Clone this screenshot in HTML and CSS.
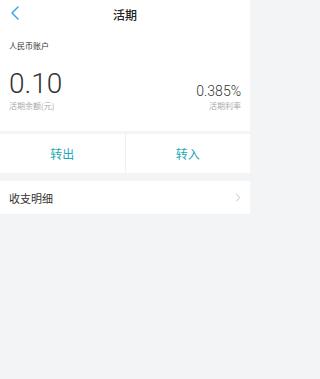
FILE: index.html
```html
<!DOCTYPE html>
<html lang="zh">
<head>
<meta charset="utf-8">
<link rel="stylesheet" href="styles.css">
</head>
<body>
<div class="page">
  <section class="summary">
    <header class="nav">
      <span class="back">
        <svg width="10" height="14" viewBox="0 0 10 14"><path d="M8 1 L2 7 L8 13" fill="none" stroke="#2b9ff2" stroke-width="1.4" stroke-linecap="round" stroke-linejoin="round"/></svg>
      </span>
      <h1 class="title">活期</h1>
    </header>
    <div class="account">人民币账户</div>
    <div class="figures">
      <div class="fig-left">
        <div class="balance">0.10</div>
        <div class="label">活期余额(元)</div>
      </div>
      <div class="fig-right">
        <div class="rate">0.385%</div>
        <div class="label">活期利率</div>
      </div>
    </div>
  </section>
  <section class="actions">
    <div class="action">转出</div>
    <div class="action">转入</div>
  </section>
  <section class="list">
    <div class="row">
      <span class="row-text">收支明细</span>
      <svg class="chev" width="6" height="9" viewBox="0 0 6 9"><path d="M1.5 1 L4.5 4.5 L1.5 8" fill="none" stroke="#c4c4c4" stroke-width="1" stroke-linecap="round" stroke-linejoin="round"/></svg>
    </div>
  </section>
</div>
</body>
</html>
```
FILE: styles.css
```css
html, body {
  margin: 0;
  padding: 0;
}
body {
  background: #f2f4f5;
  font-family: "Noto Sans CJK SC", "Noto Sans", sans-serif;
  color: #333;
  width: 250px;
  min-height: 379px;
}
.page {
  display: flex;
  flex-direction: column;
}
.summary {
  background: #fff;
  padding: 0 9px 20px 9px;
}
.nav {
  position: relative;
  height: 29px;
  display: flex;
  align-items: center;
  justify-content: center;
}
.back {
  position: absolute;
  left: 1px;
  top: 6px;
  display: flex;
}
.title {
  margin: 0;
  font-size: 12px;
  font-weight: 500;
  color: #222;
  line-height: 29px;
}
.account {
  margin-top: 11px;
  font-size: 8px;
  line-height: 12px;
  color: #333;
}
.figures {
  margin-top: 15px;
  display: flex;
  justify-content: space-between;
  align-items: flex-end;
}
.fig-left, .fig-right {
  display: flex;
  flex-direction: column;
}
.fig-right {
  align-items: flex-end;
}
.balance {
  font-family: Roboto, "Noto Sans", sans-serif;
  font-weight: 300;
  font-size: 28px;
  line-height: 33px;
  color: #333;
}
.rate {
  font-family: Roboto, "Noto Sans", sans-serif;
  font-weight: 300;
  font-size: 14px;
  line-height: 17px;
  color: #333;
}
.label {
  font-size: 8px;
  line-height: 10px;
  color: #aaa;
  margin-top: 1px;
}
.actions {
  margin-top: 3px;
  background: #fff;
  display: flex;
  height: 39px;
}
.action {
  flex: 1;
  display: flex;
  align-items: center;
  justify-content: center;
  font-size: 12px;
  color: #1fa8b6;
}
.action + .action {
  border-left: 1px solid #f0f0f0;
}
.list {
  margin-top: 8px;
  background: #fff;
}
.row {
  height: 33px;
  display: flex;
  align-items: center;
  justify-content: space-between;
  padding: 0 9px;
}
.row-text {
  font-size: 11px;
  color: #333;
}
.chev {
  display: block;
}
```
